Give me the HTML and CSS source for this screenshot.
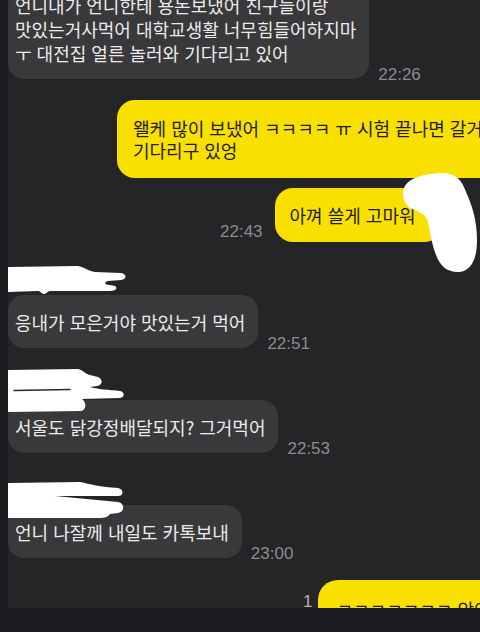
FILE: index.html
```html
<!DOCTYPE html>
<html lang="ko">
<head>
<meta charset="utf-8">
<title>채팅</title>
<link rel="stylesheet" href="styles.css">
</head>
<body>
<div class="screen">
  <div class="chat">
    <div class="row recv first">
      <div class="bubble in">언니내가 언니한테 용돈보냈어 친구들이랑<br>맛있는거사먹어 대학교생활 너무힘들어하지마<br>ㅜ 대전집 얼른 놀러와 기다리고 있어</div>
      <div class="time">22:26</div>
    </div>

    <div class="row sent s1">
      <div class="bubble out tight">왤케 많이 보냈어 ㅋㅋㅋㅋ ㅠ 시험 끝나면 갈거야<br>기다리구 있엉</div>
    </div>

    <div class="row sent s2">
      <div class="time sent-time">22:43</div>
      <div class="bubble out">아껴 쓸게 고마워 ’</div>
    </div>

    <div class="group g1">
      <div class="name"></div>
      <div class="row recv">
        <div class="bubble in">응내가 모은거야 맛있는거 먹어</div>
        <div class="time">22:51</div>
      </div>
    </div>

    <div class="group">
      <div class="name"></div>
      <div class="row recv">
        <div class="bubble in">서울도 닭강정배달되지? 그거먹어</div>
        <div class="time">22:53</div>
      </div>
    </div>

    <div class="group">
      <div class="name"></div>
      <div class="row recv">
        <div class="bubble in">언니 나잘께 내일도 카톡보내</div>
        <div class="time">23:00</div>
      </div>
    </div>

    <div class="row sent s3">
      <div class="unread">1</div>
      <div class="bubble out last">ㅋㅋㅋㅋㅋㅋㅋ 앗아미</div>
    </div>
  </div>

  <svg class="cover" viewBox="8 0 472 608" width="472" height="608" aria-hidden="true">
    <path class="ink" d="M404 188 C408 178 424 174 440 173 C455 172 462 180 466 192 C472 205 477 220 477 240 C477 258 472 270 460 272 C448 273 440 266 436 255 C432 245 430 232 428 222 C426 214 418 211 410 208 C403 203 402 195 404 188 Z"/>
    <path class="ink" d="M8 267 L78 266 C84 267 88 271 95 272 L121 273 C127 274 127 279 121 280 L108 281 C104 282 104 285 110 285 L115 286 C118 288 116 291 110 291 L50 291 C47 291 47 294 44 294 C41 294 41 291 38 291 L8 292 Z"/>
    <path class="ink" d="M8 370 L78 369 C83 370 85 374 90 375 L98 377 C103 379 103 385 97 386 L90 387 C96 389 110 390 120 391 C125 392 125 397 120 398 L82 399 C86 402 87 408 82 411 L8 412 Z"/>
    <path class="seam" d="M14 390.5 L70 389.5"/>
    <path class="ink" d="M8 483 L80 482 C90 484 100 487 118 488 C124 489 124 496 118 496 L55 496 L118 502 C125 503 125 512 118 513 L110 514 C108 517 104 518 100 518 L8 518 Z"/>
  </svg>
</div>
</body>
</html>
```

FILE: styles.css
```css
html, body {
  margin: 0;
  padding: 0;
}

body {
  width: 480px;
  height: 632px;
  overflow: hidden;
  background: #1c1d21;
  font-family: "Noto Sans CJK KR", "Noto Sans", sans-serif;
}

.screen {
  position: relative;
  margin-left: 8px;
  width: 472px;
  height: 608px;
  overflow: hidden;
  background: #252528;
}

.chat {
  display: flex;
  flex-direction: column;
}

.row {
  display: flex;
  align-items: flex-end;
}

.recv {
  gap: 9px;
}

.first {
  margin-top: -22px;
}

.bubble {
  flex-shrink: 0;
  white-space: nowrap;
  font-size: 18px;
  line-height: 24px;
  border-radius: 16px;
}

.bubble.in {
  background: #39393c;
  color: #ebebeb;
  padding: 14.5px 13px 14.5px 7px;
}

.bubble.out {
  background: #f9e000;
  color: #1d1d1d;
  padding: 15px 16px 15px 15px;
  border-radius: 18px;
}

.bubble.out.tight {
  line-height: 22px;
  padding: 17px 16px;
}

.bubble.out.last {
  padding: 17px 18px;
  border-radius: 20px;
}

.time {
  font-family: "Liberation Sans", Arial, sans-serif;
  font-size: 17px;
  line-height: 17px;
  color: #8b8b8e;
  margin-bottom: -4px;
}

.time.sent-time {
  margin-bottom: 2px;
}

.sent {
  gap: 12px;
}

.s1 {
  margin-top: 21px;
  padding-left: 109px;
}

.s2 {
  margin-top: 10px;
  padding-left: 212px;
}

.s3 {
  margin-top: 22px;
  padding-left: 295px;
  align-items: flex-start;
  gap: 6px;
}

.unread {
  font-family: "Liberation Sans", Arial, sans-serif;
  font-size: 17px;
  line-height: 17px;
  color: #bab48f;
  margin-top: 13px;
}

.group {
  margin-top: 22px;
}

.group.g1 {
  margin-top: 23px;
}

.name {
  height: 30px;
}

.cover {
  position: absolute;
  left: 0;
  top: 0;
}

.ink {
  fill: #ffffff;
}

.seam {
  fill: none;
  stroke: #2a2a2d;
  stroke-width: 1.5;
  stroke-linecap: round;
}
```
